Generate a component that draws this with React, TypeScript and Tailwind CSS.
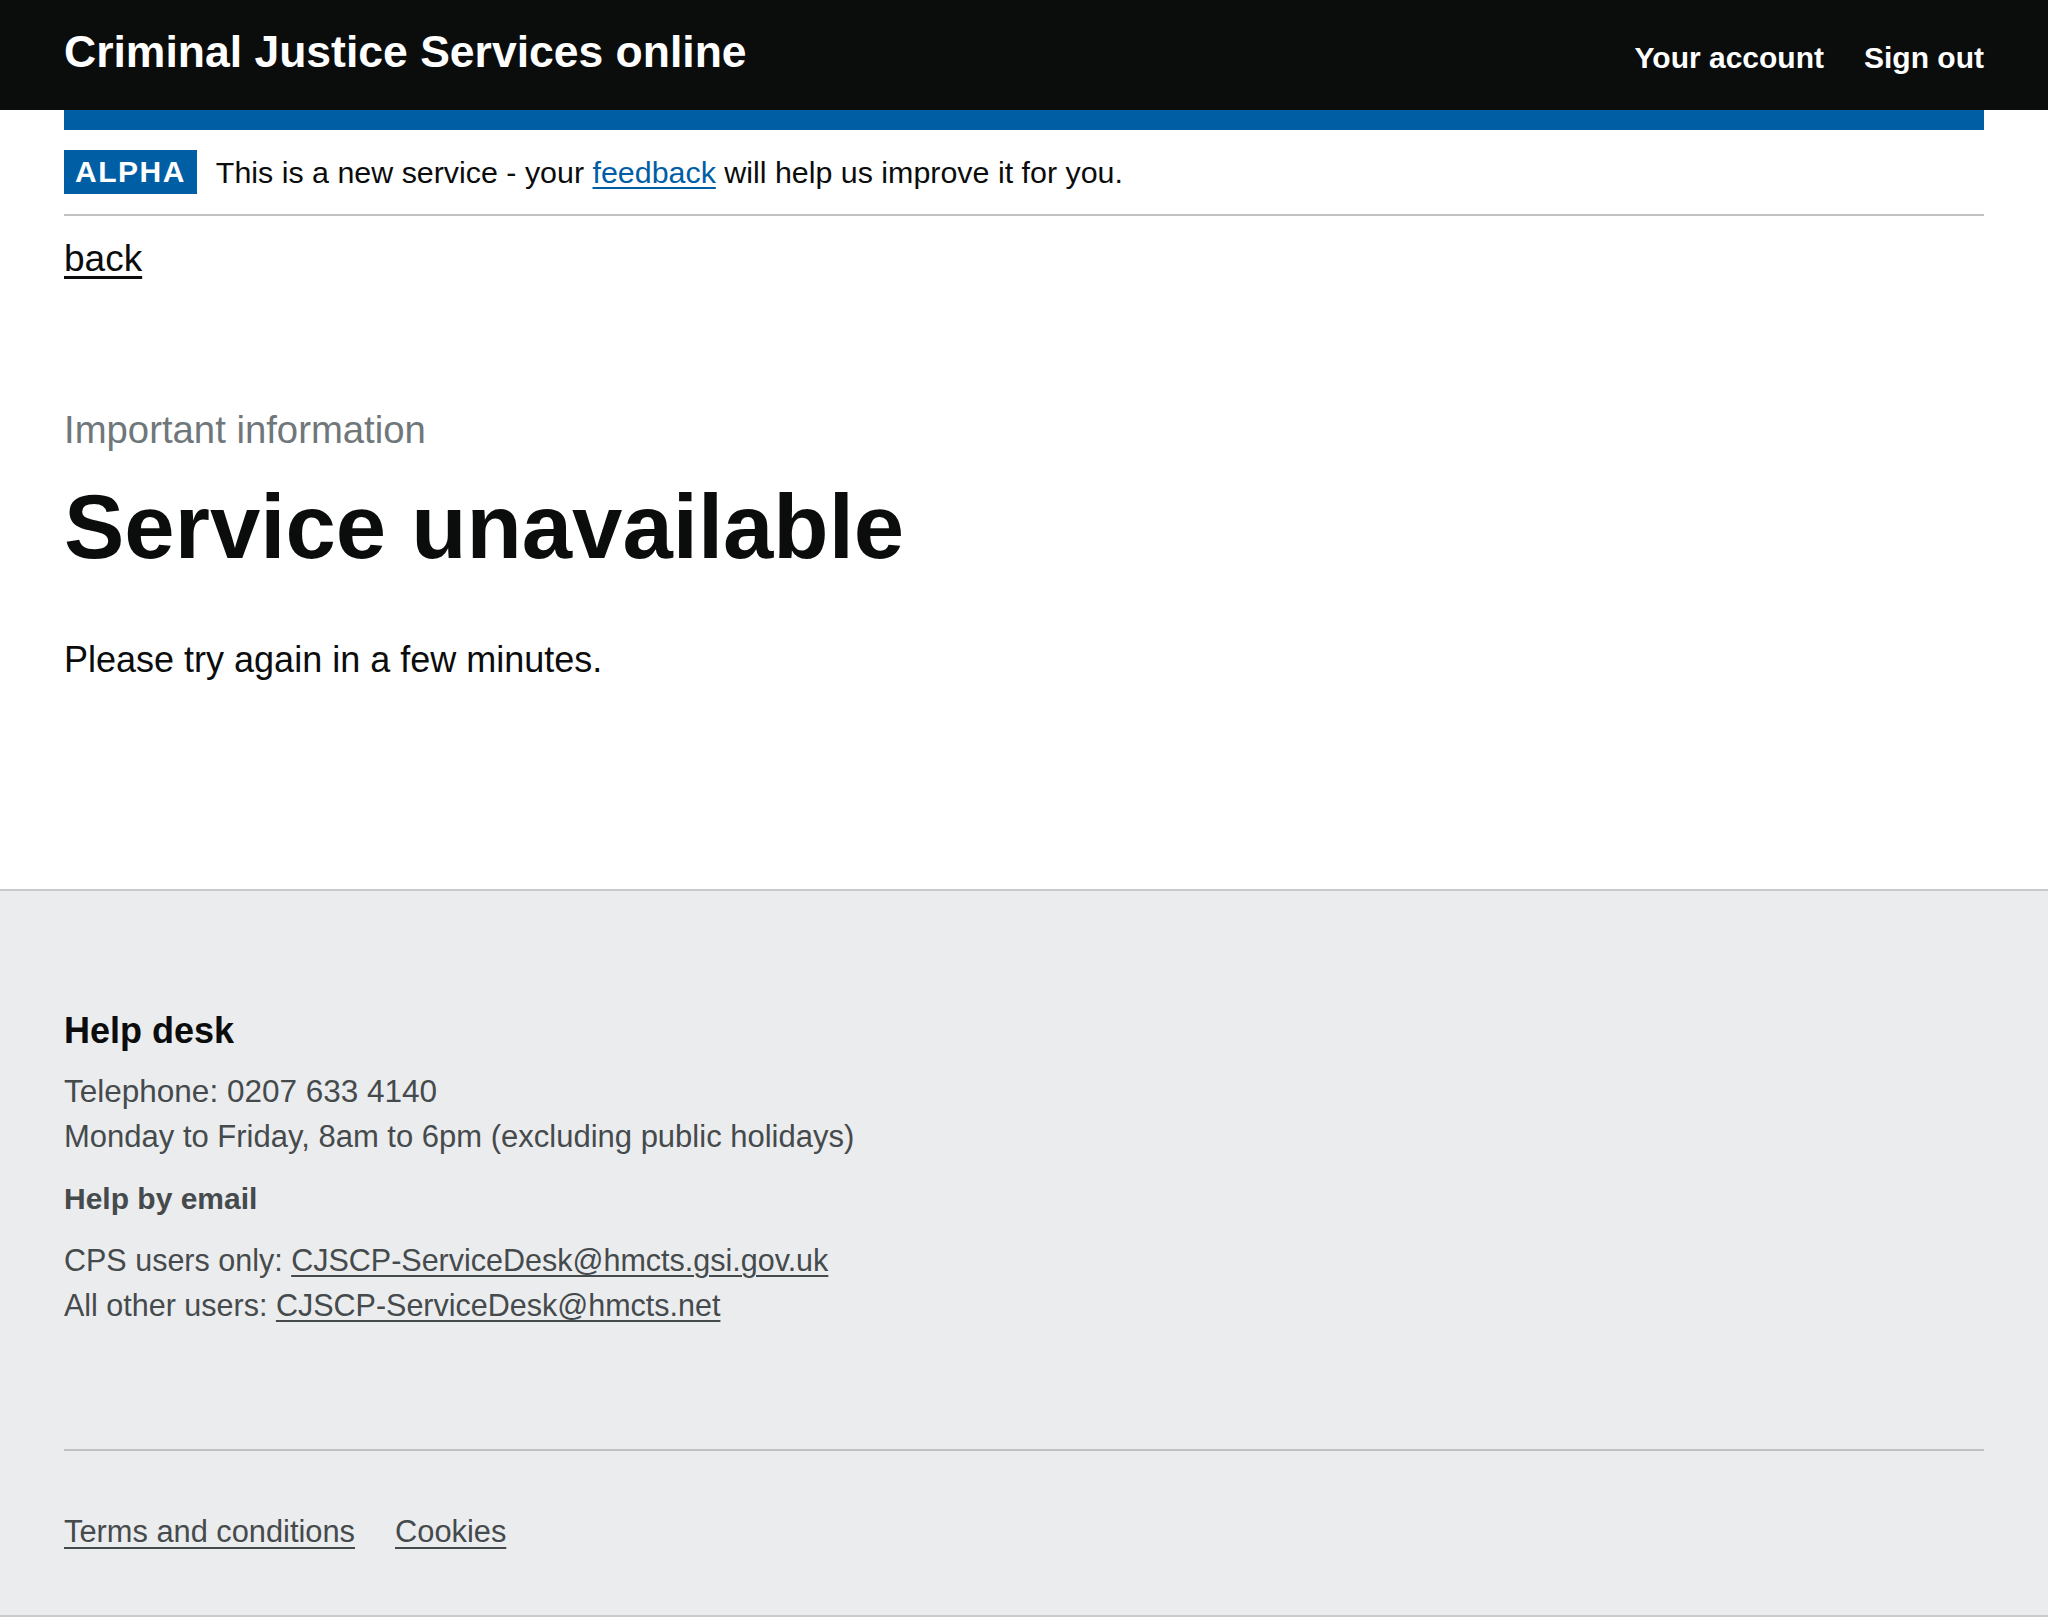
const font = "font-['Liberation_Sans',Arial,sans-serif]";

function Header() {
  return (
    <header className="h-[110px] bg-[#0b0c0c] text-white">
      <div className="mx-[64px] flex items-start justify-between">
        <a href="#" className="mt-[30px] text-[44.5px] font-bold leading-[44px] no-underline">
          Criminal Justice Services online
        </a>
        <nav className="mt-[43px] flex gap-[40px] text-[30px] font-bold leading-[30px]">
          <a href="#">Your account</a>
          <a href="#">Sign out</a>
        </nav>
      </div>
    </header>
  );
}

function PhaseBanner() {
  return (
    <div className="mx-[64px]">
      <div className="h-[20px] bg-[#005ea5]" />
      <div className="flex items-center gap-[19px] border-b-2 border-[#bfc1c3] pt-[20px] pb-[20px]">
        <strong className="h-[44px] bg-[#005ea5] px-[11px] text-[30px] font-bold leading-[44px] tracking-[1.5px] text-white">
          ALPHA
        </strong>
        <span className="text-[30.4px] leading-[44px] text-[#0b0c0c]">
          This is a new service - your{' '}
          <a href="#" className="text-[#005ea5] underline decoration-2 underline-offset-[4px]">
            feedback
          </a>{' '}
          will help us improve it for you.
        </span>
      </div>
    </div>
  );
}

function Main() {
  return (
    <main className="mx-[64px] text-[#0b0c0c]">
      <a
        href="#"
        className="mt-[25px] inline-block text-[37px] leading-[36px] underline decoration-[3px] underline-offset-[5px]"
      >
        back
      </a>
      <p className="mt-[133px] text-[38.3px] leading-[38px] text-[#6f777b]">Important information</p>
      <h1 className="mt-[33px] text-[90.5px] font-bold leading-[90px]">Service unavailable</h1>
      <p className="mt-[70px] text-[36px] leading-[36px]">Please try again in a few minutes.</p>
    </main>
  );
}

function Footer() {
  return (
    <footer className="mt-[211px] border-t-2 border-b-2 border-[#c8cacc] bg-[#ebecee] text-[#454a4c]">
      <div className="mx-[64px]">
        <h2 className="pt-[122px] text-[36px] font-bold leading-[36px] text-[#0b0c0c]">Help desk</h2>
        <div className="mt-[20px] leading-[45px]">
          <p className="text-[31.5px]">Telephone: 0207 633 4140</p>
          <p className="text-[31px]">Monday to Friday, 8am to 6pm (excluding public holidays)</p>
        </div>
        <h3 className="mt-[25px] text-[30px] font-bold leading-[30px]">Help by email</h3>
        <div className="mt-[24px] text-[30.5px] leading-[45px]">
          <p>
            CPS users only:{' '}
            <a href="#" className="underline decoration-2 underline-offset-[4px]">
              CJSCP-ServiceDesk@hmcts.gsi.gov.uk
            </a>
          </p>
          <p>
            All other users:{' '}
            <a href="#" className="underline decoration-2 underline-offset-[4px]">
              CJSCP-ServiceDesk@hmcts.net
            </a>
          </p>
        </div>
        <div className="mt-[121px] border-t-2 border-[#bfc1c3]" />
        <ul className="flex gap-[40px] pt-[66px] pb-[68px] text-[30.8px] leading-[30px]">
          <li>
            <a href="#" className="underline decoration-2 underline-offset-[5px]">
              Terms and conditions
            </a>
          </li>
          <li>
            <a href="#" className="underline decoration-2 underline-offset-[5px]">
              Cookies
            </a>
          </li>
        </ul>
      </div>
    </footer>
  );
}

export default function App() {
  return (
    <div className={`${font} min-h-[1618px] bg-white`}>
      <Header />
      <PhaseBanner />
      <Main />
      <Footer />
    </div>
  );
}
